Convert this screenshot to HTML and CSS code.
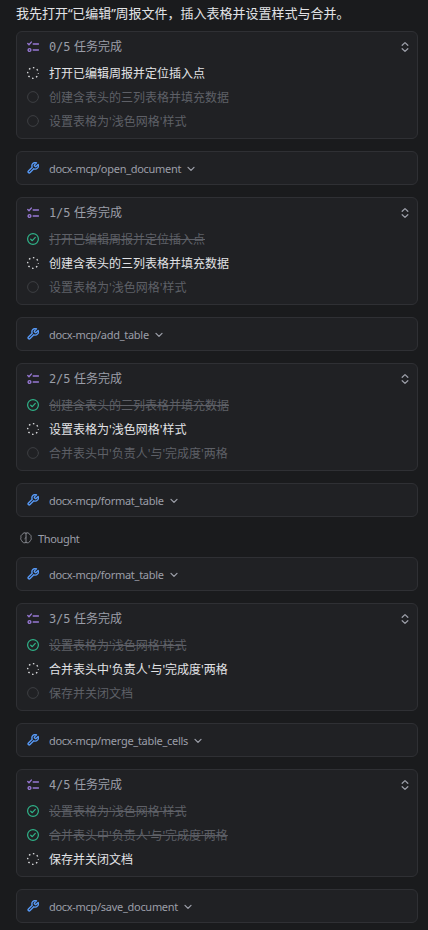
FILE: index.html
```html
<!DOCTYPE html>
<html lang="zh-CN">
<head>
<meta charset="utf-8">
<title>任务</title>
<link rel="stylesheet" href="styles.css">
</head>
<body>
<svg class="defs" aria-hidden="true">
  <symbol id="list" viewBox="0 0 12 12"><path d="M.8 2.500l1.200 1.200 2.300-2.600M6.200 3h5.300M6.200 9h5.300"/><circle cx="2.500" cy="9" r="1.400"/></symbol>
  <symbol id="sort" viewBox="0 0 8 12"><path d="M1.200 4.300L4 1.600l2.800 2.700M1.200 7.700L4 10.400l2.800-2.700"/></symbol>
  <symbol id="active" viewBox="0 0 12 12"><circle cx="6" cy="6" r="5.300" stroke-dasharray="1.500 2.663" stroke-dashoffset=".75"/></symbol>
  <symbol id="todo" viewBox="0 0 12 12"><circle cx="6" cy="6" r="5.400"/></symbol>
  <symbol id="done" viewBox="0 0 12 12"><circle cx="6" cy="6" r="5.400"/><path d="M3.700 6.200l1.600 1.500 3-3.300"/></symbol>
  <symbol id="wrench" viewBox="1 1 22 22"><path d="M14.7 6.3a1 1 0 0 0 0 1.4l1.600 1.600a1 1 0 0 0 1.400 0l3.770-3.770a6 6 0 0 1-7.940 7.940l-6.910 6.910a2.120 2.120 0 0 1-3-3l6.910-6.910a6 6 0 0 1 7.940-7.940l-3.760 3.760z"/></symbol>
  <symbol id="chevron" viewBox="0 0 8 6"><path d="M1 1.400l3 3 3-3"/></symbol>
  <symbol id="brain" viewBox="0 0 12 12"><path d="M6 1.200C4.600.2 3 .9 2.700 2.200 1.200 2.700.6 4 1 5.300c-.6 1.400-.2 2.800.9 3.500.3 1.800 2.600 2.700 4.100 1.700M6 1.200C7.400.2 9 .9 9.300 2.200c1.500.5 2.100 1.800 1.700 3.100.6 1.400.2 2.800-.9 3.500-.3 1.800-2.600 2.700-4.100 1.700M6 1.200v9.300M6 5.500L4.800 6.600"/></symbol>
</svg>
<main class="feed">
  <p class="intro">我先打开<span class="quote">“</span>已编辑<span class="quote">”</span>周报文件，插入表格并设置样式与合并。</p>

  <section class="card tasks">
    <header class="head"><svg class="icon list"><use href="#list"/></svg><span class="count">0/5</span><span>任务完成</span><svg class="sort"><use href="#sort"/></svg></header>
    <ul>
      <li class="active"><svg class="icon"><use href="#active"/></svg><span>打开已编辑周报并定位插入点</span></li>
      <li class="todo"><svg class="icon"><use href="#todo"/></svg><span>创建含表头的三列表格并填充数据</span></li>
      <li class="todo"><svg class="icon"><use href="#todo"/></svg><span>设置表格为'浅色网格'样式</span></li>
    </ul>
  </section>
  <section class="card tool"><svg class="icon wrench"><use href="#wrench"/></svg><span>docx-mcp/open_document</span><svg class="chevron"><use href="#chevron"/></svg></section>

  <section class="card tasks">
    <header class="head"><svg class="icon list"><use href="#list"/></svg><span class="count">1/5</span><span>任务完成</span><svg class="sort"><use href="#sort"/></svg></header>
    <ul>
      <li class="done"><svg class="icon"><use href="#done"/></svg><span>打开已编辑周报并定位插入点</span></li>
      <li class="active"><svg class="icon"><use href="#active"/></svg><span>创建含表头的三列表格并填充数据</span></li>
      <li class="todo"><svg class="icon"><use href="#todo"/></svg><span>设置表格为'浅色网格'样式</span></li>
    </ul>
  </section>
  <section class="card tool"><svg class="icon wrench"><use href="#wrench"/></svg><span>docx-mcp/add_table</span><svg class="chevron"><use href="#chevron"/></svg></section>

  <section class="card tasks">
    <header class="head"><svg class="icon list"><use href="#list"/></svg><span class="count">2/5</span><span>任务完成</span><svg class="sort"><use href="#sort"/></svg></header>
    <ul>
      <li class="done"><svg class="icon"><use href="#done"/></svg><span>创建含表头的三列表格并填充数据</span></li>
      <li class="active"><svg class="icon"><use href="#active"/></svg><span>设置表格为'浅色网格'样式</span></li>
      <li class="todo"><svg class="icon"><use href="#todo"/></svg><span>合并表头中'负责人'与'完成度'两格</span></li>
    </ul>
  </section>
  <section class="card tool"><svg class="icon wrench"><use href="#wrench"/></svg><span>docx-mcp/format_table</span><svg class="chevron"><use href="#chevron"/></svg></section>

  <div class="thought"><svg class="icon"><use href="#brain"/></svg><span>Thought</span></div>

  <section class="card tool"><svg class="icon wrench"><use href="#wrench"/></svg><span>docx-mcp/format_table</span><svg class="chevron"><use href="#chevron"/></svg></section>

  <section class="card tasks">
    <header class="head"><svg class="icon list"><use href="#list"/></svg><span class="count">3/5</span><span>任务完成</span><svg class="sort"><use href="#sort"/></svg></header>
    <ul>
      <li class="done"><svg class="icon"><use href="#done"/></svg><span>设置表格为'浅色网格'样式</span></li>
      <li class="active"><svg class="icon"><use href="#active"/></svg><span>合并表头中'负责人'与'完成度'两格</span></li>
      <li class="todo"><svg class="icon"><use href="#todo"/></svg><span>保存并关闭文档</span></li>
    </ul>
  </section>
  <section class="card tool"><svg class="icon wrench"><use href="#wrench"/></svg><span>docx-mcp/merge_table_cells</span><svg class="chevron"><use href="#chevron"/></svg></section>

  <section class="card tasks">
    <header class="head"><svg class="icon list"><use href="#list"/></svg><span class="count">4/5</span><span>任务完成</span><svg class="sort"><use href="#sort"/></svg></header>
    <ul>
      <li class="done"><svg class="icon"><use href="#done"/></svg><span>设置表格为'浅色网格'样式</span></li>
      <li class="done"><svg class="icon"><use href="#done"/></svg><span>合并表头中'负责人'与'完成度'两格</span></li>
      <li class="active"><svg class="icon"><use href="#active"/></svg><span>保存并关闭文档</span></li>
    </ul>
  </section>
  <section class="card tool"><svg class="icon wrench"><use href="#wrench"/></svg><span>docx-mcp/save_document</span><svg class="chevron"><use href="#chevron"/></svg></section>
</main>
</body>
</html>
```
FILE: styles.css
```css
* { box-sizing: border-box; }
body {
  margin: 0;
  height: 930px;
  overflow: hidden;
  background: #1a1b1d;
  color: #9b9ea8;
  font: 12px/24px "Noto Sans", "Noto Sans CJK SC", sans-serif;
}
.defs { display: none; }
svg { fill: none; stroke: currentColor; stroke-linecap: round; stroke-linejoin: round; flex: none; }
.feed {
  display: flex;
  flex-direction: column;
  gap: 12px;
  padding: 3px 10px 0 16px;
}
.intro {
  margin: 0 0 -4px;
  height: 20px;
  color: #e2e3e6;
  font-size: 13px;
  line-height: 20px;
  white-space: nowrap;
}
.quote { letter-spacing: -.5px; }
.card {
  border: 1px solid #2f3034;
  border-radius: 6px;
  background: #202124;
}
.tasks { height: 108px; padding: 3px 8px 0 10px; }
.head { display: flex; align-items: center; height: 24px; margin-bottom: 3px; }
.icon { width: 12px; height: 12px; margin-right: 10px; }
.list { color: #9678d3; stroke-width: 1.4; }
.count {
  width: 25px;
  font-family: "DejaVu Sans Mono", monospace;
  font-size: 12px;
  letter-spacing: -.1px;
}
.sort { width: 8px; height: 12px; margin-left: auto; stroke-width: 1.3; }
ul { margin: 0; padding: 0; list-style: none; }
li { display: flex; align-items: center; height: 24px; white-space: nowrap; }
li .icon { margin-bottom: 2px; }
.active { color: #e2e3e6; }
.active .icon { stroke-linecap: butt; stroke-width: 1.3; }
.todo { color: #5e6067; }
.todo .icon { color: #3d3f43; }
.done { color: #5e6067; }
.done span { text-decoration: line-through; }
.done .icon { color: #2fb389; stroke-width: 1.2; }
.tool {
  display: flex;
  align-items: center;
  height: 34px;
  padding: 0 10px;
  font-size: 11px;
  letter-spacing: -.29px;
}
.tool span { padding-top: 2px; }
.wrench { color: #5799f5; stroke-width: 2.5; }
.chevron { width: 8px; height: 6px; margin: 2px 0 0 6px; stroke-width: 1.3; }
.thought {
  display: flex;
  align-items: center;
  height: 16px;
  padding-left: 4px;
  font-size: 11px;
  letter-spacing: -.35px;
}
.thought span { padding-top: 3px; }
.thought .icon { margin: 2px 6px 0 0; color: #85878e; }
```
